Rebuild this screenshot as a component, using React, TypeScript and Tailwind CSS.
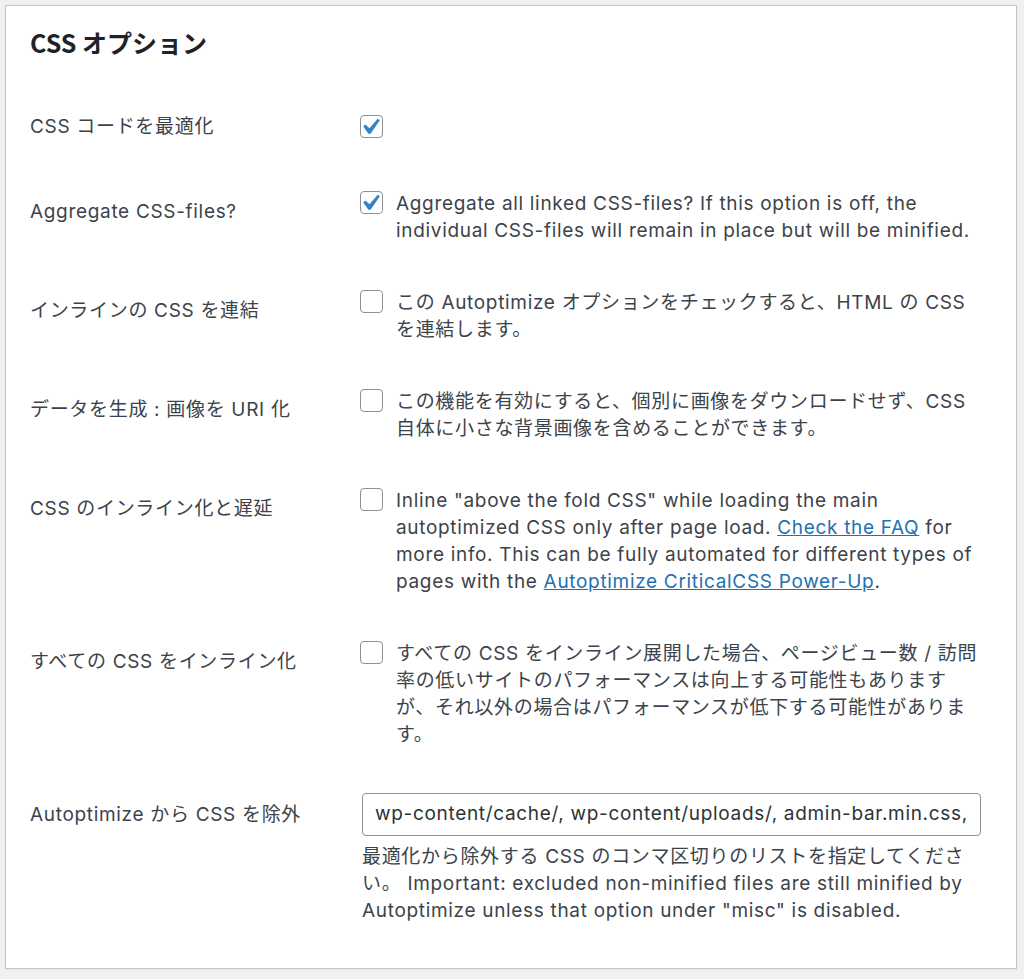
import type { ReactNode } from "react";

const Checkbox = ({ checked }: { checked?: boolean }) => (
  <span className="relative block w-[23px] h-[23px] shrink-0 rounded-[4px] border border-[#8c8f94] bg-white">
    {checked && (
      <svg viewBox="0 0 20 20" className="absolute left-[-7px] top-[-5px] w-[32px] h-[32px]">
        <path d="M14.83 4.89l1.34.94-5.81 8.38H9.02L5.78 9.67l1.34-1.25 2.57 2.4z" fill="#3582c4" />
      </svg>
    )}
  </span>
);

const Row = ({ label, children }: { label: string; children: ReactNode }) => (
  <div className="flex items-start pt-[23px] pb-[22px]">
    <div className="w-[330px] shrink-0 pt-[8px] leading-[27px]">{label}</div>
    <div className="flex-1">{children}</div>
  </div>
);

const OptionText = ({ checked, lines }: { checked?: boolean; lines: ReactNode[] }) => (
  <div className="flex items-start">
    <div className="pt-[1px]">
      <Checkbox checked={checked} />
    </div>
    <div className="ml-[13px] leading-[27px]">
      {lines.map((l, i) => (
        <div key={i} className="whitespace-nowrap">
          {l}
        </div>
      ))}
    </div>
  </div>
);

export default function App() {
  return (
    <div className="min-h-screen bg-[#f0f0f1] pt-[5px] pl-[5px] text-[#3c434a] text-[19px] tracking-[0.68px] font-['Inter','Noto_Sans_CJK_JP',sans-serif]">
      <div className="w-[1012px] border border-[#c3c4c7] bg-white pl-[24px] pr-[34px] pt-[22px] pb-[22px] shadow-[0_1px_1px_rgba(0,0,0,0.04)]">
        <h2 className="leading-[28px] text-[25px] tracking-normal font-bold text-[#1d2327] font-['Noto_Sans_CJK_JP',sans-serif]">
          CSS オプション
        </h2>

        <div className="flex items-start h-[111px]">
          <div className="w-[330px] shrink-0 pt-[57px] leading-[27px]">CSS コードを最適化</div>
          <div className="pt-[59px]">
            <Checkbox checked />
          </div>
        </div>

        <Row label="Aggregate CSS-files?">
          <OptionText
            checked
            lines={[
              "Aggregate all linked CSS-files? If this option is off, the",
              "individual CSS-files will remain in place but will be minified.",
            ]}
          />
        </Row>

        <Row label="インラインの CSS を連結">
          <OptionText lines={["この Autoptimize オプションをチェックすると、HTML の CSS", "を連結します。"]} />
        </Row>

        <Row label="データを生成 : 画像を URI 化">
          <OptionText
            lines={["この機能を有効にすると、個別に画像をダウンロードせず、CSS", "自体に小さな背景画像を含めることができます。"]}
          />
        </Row>

        <Row label="CSS のインライン化と遅延">
          <OptionText
            lines={[
              'Inline "above the fold CSS" while loading the main',
              <>
                autoptimized CSS only after page load.{" "}
                <a className="text-[#2271b1] underline">Check the FAQ</a> for
              </>,
              "more info. This can be fully automated for different types of",
              <>
                pages with the <a className="text-[#2271b1] underline">Autoptimize CriticalCSS Power-Up</a>.
              </>,
            ]}
          />
        </Row>

        <Row label="すべての CSS をインライン化">
          <OptionText
            lines={[
              "すべての CSS をインライン展開した場合、ページビュー数 / 訪問",
              "率の低いサイトのパフォーマンスは向上する可能性もあります",
              "が、それ以外の場合はパフォーマンスが低下する可能性がありま",
              "す。",
            ]}
          />
        </Row>

        <Row label="Autoptimize から CSS を除外">
          <div className="ml-[2px]">
            <div className="flex items-center w-[619px] h-[43px] rounded-[4px] border border-[#8c8f94] bg-white px-[12px] text-[#2c3338] whitespace-nowrap overflow-hidden">
              wp-content/cache/, wp-content/uploads/, admin-bar.min.css,
            </div>
            <div className="mt-[7px] leading-[27px]">
              <div className="whitespace-nowrap">最適化から除外する CSS のコンマ区切りのリストを指定してくださ</div>
              <div className="whitespace-nowrap">い。 Important: excluded non-minified files are still minified by</div>
              <div className="whitespace-nowrap">Autoptimize unless that option under "misc" is disabled.</div>
            </div>
          </div>
        </Row>
      </div>
    </div>
  );
}
